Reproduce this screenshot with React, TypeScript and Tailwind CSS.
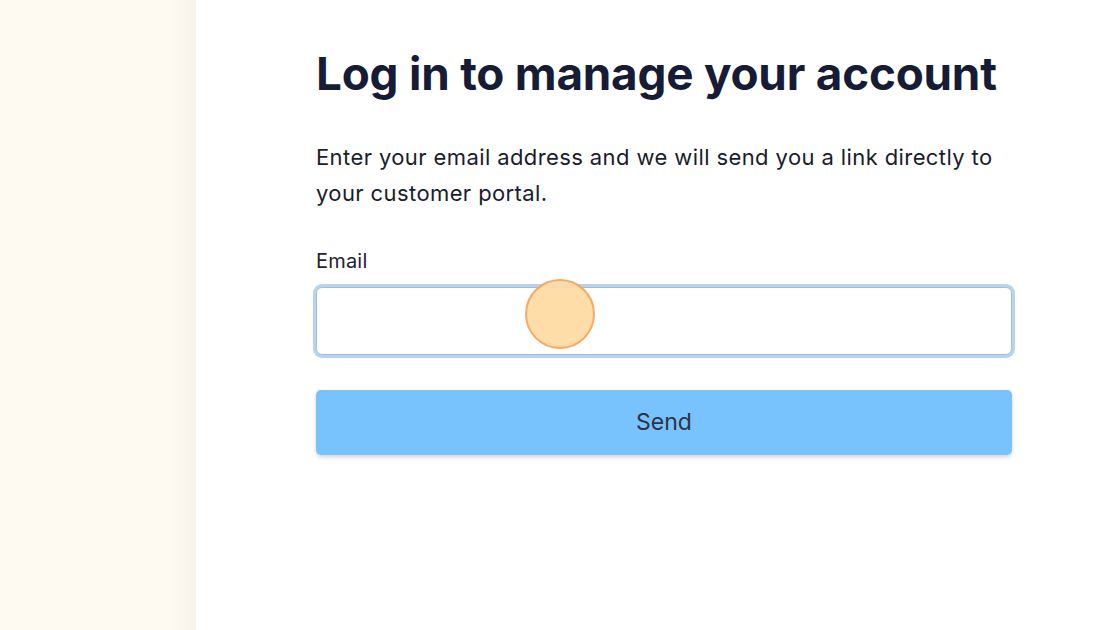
import React from 'react';

export default function App() {
  return (
    <div className="w-[1120px] h-[630px] flex bg-white overflow-hidden" style={{ fontFamily: 'Inter, "Noto Sans", sans-serif' }}>
      {/* left cream panel */}
      <div className="w-[196px] h-full bg-[#fffaf1] flex justify-end">
        <div className="w-[26px] h-full bg-gradient-to-r from-[#fffaf1] to-[#f7f3ea]" />
      </div>

      {/* form */}
      <div className="flex-1 pl-[120px] pt-[46px]">
        <div className="w-[696px] flex flex-col">
          <h1 className="text-[45.8px] leading-[56px] font-bold text-[#161c36] tracking-[-0.2px] whitespace-nowrap">Log in to manage your account</h1>
          <p className="mt-[37px] text-[22px] leading-[36px] tracking-[0.4px] text-[#1a1d2c]">
            Enter your email address and we will send you a link directly to your customer portal.
          </p>
          <label className="mt-[37px] text-[20px] leading-[26px] tracking-[0.2px] text-[#1f2230]">Email</label>
          <div className="relative mt-[13px]">
            <input className="w-full h-[68px] rounded-[6px] border border-[#9dbfdc] bg-white outline-none ring-[3px] ring-[#b6d4ee]" />
            <div className="absolute left-[209px] top-[-8px] w-[70px] h-[70px] rounded-full bg-[#fedca4] border-2 border-[#f5a75e] opacity-95" />
          </div>
          <button className="mt-[35px] h-[65px] w-full rounded-[5px] bg-[#78c2fd] text-[23px] text-[#2b3445] shadow-[0_2px_4px_rgba(0,0,0,0.18)]">
            Send
          </button>
        </div>
      </div>
    </div>
  );
}
